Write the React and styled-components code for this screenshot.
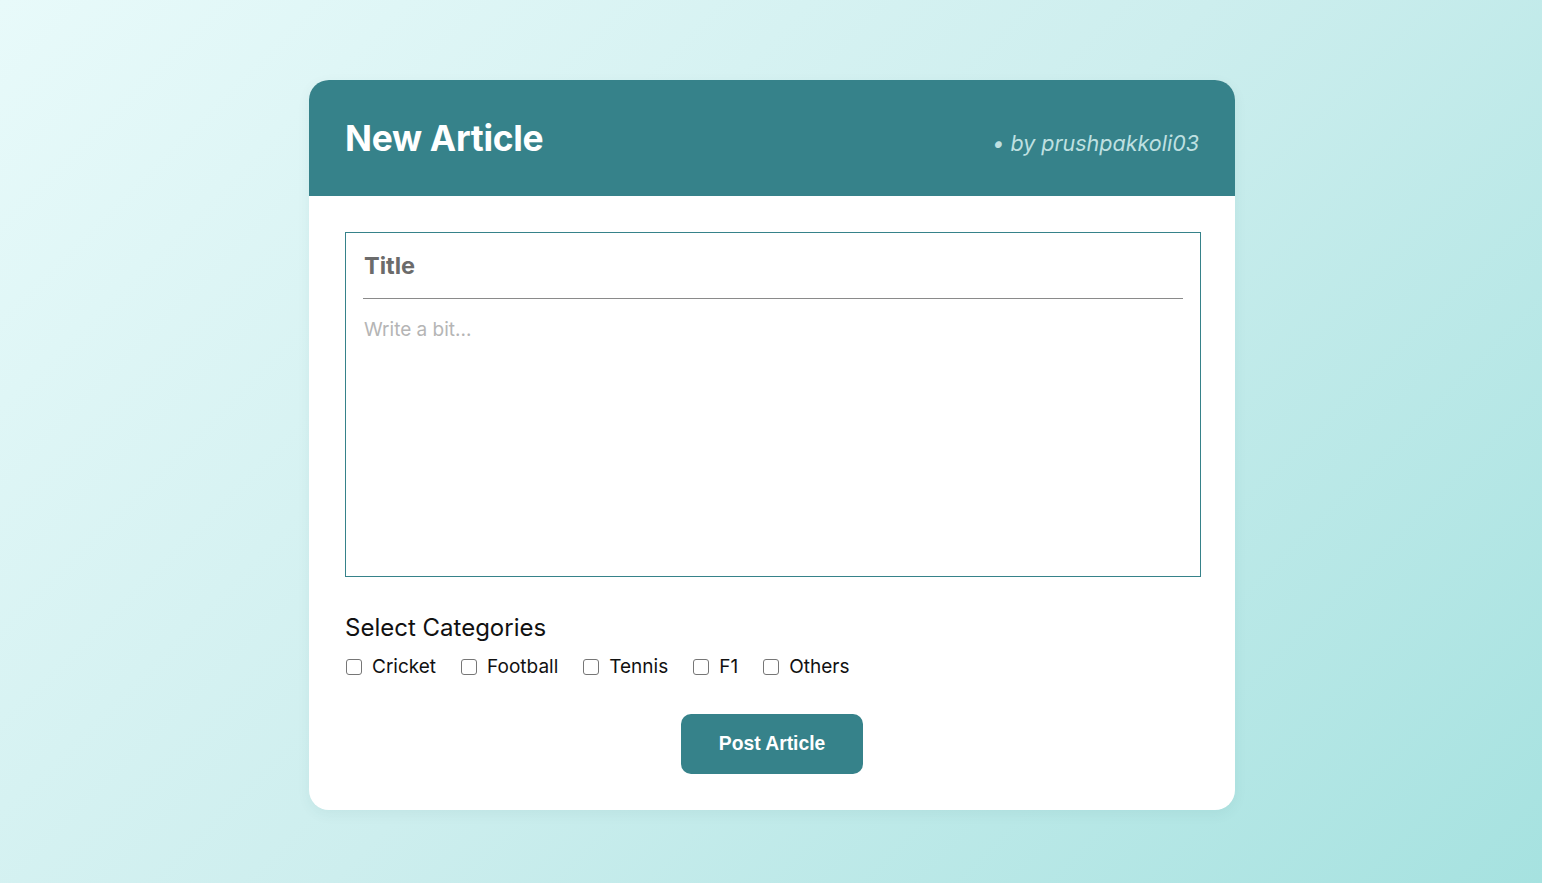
import React from "react";
import styled, { createGlobalStyle } from "styled-components";

const Global = createGlobalStyle`
  html, body { margin: 0; padding: 0; }
  body {
    min-height: 100vh;
    font-family: Inter, "Noto Sans", sans-serif;
    background: linear-gradient(135deg, #e8fafa 0%, #cdeeee 50%, #a6e2e0 100%);
  }
  * { box-sizing: border-box; }
`;

const Page = styled.div`
  min-height: 883px;
  display: flex;
  justify-content: center;
  padding: 80px 0 0 2px;
`;

const Card = styled.div`
  width: 926px;
  height: 730px;
  background: #ffffff;
  border-radius: 20px;
  overflow: hidden;
  display: flex;
  flex-direction: column;
  box-shadow: 0 4px 14px rgba(0, 80, 80, 0.06);
`;

const Header = styled.div`
  height: 116px;
  background: #36828a;
  padding: 0 36px;
  display: flex;
  justify-content: space-between;
  align-items: center;
`;

const Heading = styled.h1`
  margin: 0;
  font-family: Inter, sans-serif;
  font-weight: 700;
  font-size: 35.4px;
  color: #ffffff;
  letter-spacing: -0.3px;
`;

const Byline = styled.span`
  font-family: Inter, sans-serif;
  font-style: italic;
  font-size: 21.5px;
  color: #bfe0e1;
  margin-top: 10px;
`;

const Body = styled.div`
  padding: 36px;
  display: flex;
  flex-direction: column;
`;

const Editor = styled.div`
  width: calc(100% + 2px);
  height: 345px;
  border: 1px solid #36828a;
  padding: 18px 17px 18px 17px;
  display: flex;
  flex-direction: column;
`;

const TitleInput = styled.input`
  border: none;
  border-bottom: 1px solid #8a8a8a;
  outline: none;
  font-family: Inter, sans-serif;
  font-weight: 700;
  font-size: 23.5px;
  line-height: 28px;
  height: 48px;
  padding: 0 0 19px 1px;
  color: #6b6b6b;
  &::placeholder { color: #6b6b6b; }
`;

const TextArea = styled.textarea`
  flex: 1;
  margin-top: 18px;
  border: none;
  outline: none;
  resize: none;
  padding: 0 0 0 1px;
  font-family: Inter, sans-serif;
  font-size: 19px;
  line-height: 26px;
  color: #333;
  &::placeholder { color: #b5b5b5; }
`;

const SectionTitle = styled.h2`
  margin: 36px 0 0;
  font-family: Inter, sans-serif;
  font-weight: 400;
  font-size: 24px;
  line-height: 30px;
  color: #111;
`;

const Options = styled.div`
  display: flex;
  gap: 24px;
  margin-top: 11px;
`;

const Option = styled.label`
  display: flex;
  align-items: center;
  gap: 10px;
  font-family: Inter, sans-serif;
  font-size: 19px;
  line-height: 26px;
  color: #111;
  cursor: pointer;
`;

const Box = styled.input`
  appearance: none;
  margin: 0 0 0 1px;
  width: 16px;
  height: 16px;
  border: 1.5px solid #767676;
  border-radius: 3px;
  background: #fff;
  &:checked { background: #36828a; border-color: #36828a; }
`;

const Actions = styled.div`
  display: flex;
  justify-content: center;
  margin-top: 34px;
`;

const Button = styled.button`
  width: 182px;
  height: 60px;
  border: none;
  border-radius: 10px;
  background: #36828a;
  color: #ffffff;
  font-family: "Liberation Sans", Arial, sans-serif;
  font-weight: 700;
  font-size: 19.3px;
  cursor: pointer;
`;

const categories = ["Cricket", "Football", "Tennis", "F1", "Others"];

export default function App() {
  return (
    <>
      <Global />
      <Page>
        <Card>
          <Header>
            <Heading>New Article</Heading>
            <Byline>• by prushpakkoli03</Byline>
          </Header>
          <Body>
            <Editor>
              <TitleInput placeholder="Title" />
              <TextArea placeholder="Write a bit..." />
            </Editor>
            <SectionTitle>Select Categories</SectionTitle>
            <Options>
              {categories.map((c) => (
                <Option key={c}>
                  <Box type="checkbox" />
                  {c}
                </Option>
              ))}
            </Options>
            <Actions>
              <Button>Post Article</Button>
            </Actions>
          </Body>
        </Card>
      </Page>
    </>
  );
}
